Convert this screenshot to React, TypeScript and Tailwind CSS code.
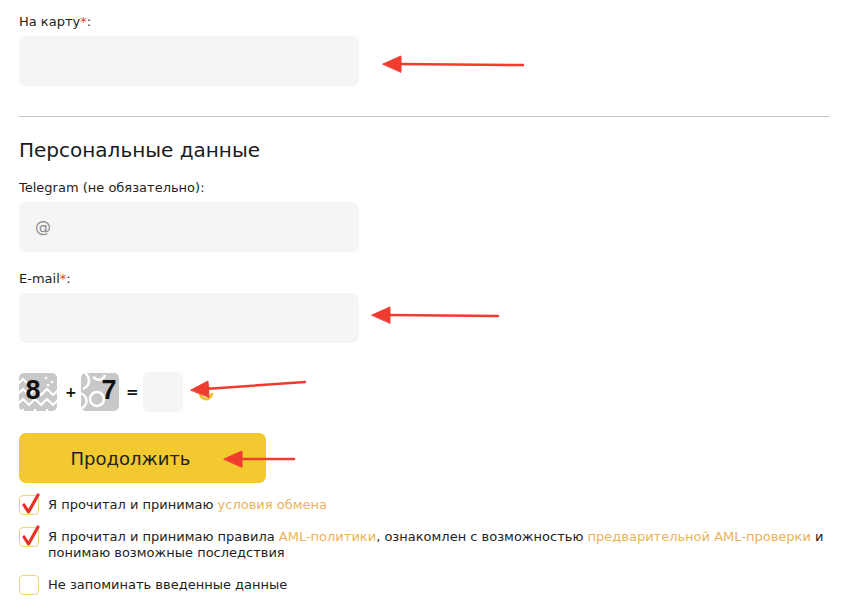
import React from 'react'

const font = "font-['DejaVu_Sans',sans-serif]"

function Label({ text, required }: { text: string; required?: boolean }) {
  return (
    <div className="text-[13px] leading-[16px] text-[#1e1e1e]">
      {text}
      {required && <span className="text-[#e5443a]">*</span>}:
    </div>
  )
}

function Field({ placeholder }: { placeholder?: string }) {
  return (
    <div className="mt-[6px] h-[50px] w-[340px] rounded-[7px] bg-[#f5f5f5] flex items-center px-[16px] text-[16px] text-[#8a8a8a]">
      {placeholder}
    </div>
  )
}

function Captcha8() {
  return (
    <svg width="38" height="38" viewBox="0 0 38 38">
      <rect width="38" height="38" rx="5" fill="#c8c8c8" />
      <g stroke="#ffffff" strokeWidth="2" fill="none">
        <path d="M-2 22 L4 16 L10 22 L16 16 L22 22 L28 16 L34 22 L40 16" />
        <path d="M-2 32 L4 26 L10 32 L16 26 L22 32 L28 26 L34 32 L40 26" />
        <path d="M-2 12 L4 6 L10 12" />
      </g>
      <g fill="#ffffff">
        <circle cx="27" cy="5" r="1.3" />
        <circle cx="33" cy="9" r="1.3" />
        <circle cx="29" cy="12" r="1.3" />
        <circle cx="4" cy="37" r="1.3" />
        <circle cx="16" cy="37" r="1.3" />
        <circle cx="28" cy="37" r="1.3" />
      </g>
      <text x="14" y="26" textAnchor="middle" fontFamily="Liberation Sans, sans-serif" fontWeight="700" fontSize="27" fill="#111111">
        8
      </text>
    </svg>
  )
}

function Captcha7() {
  return (
    <svg width="38" height="38" viewBox="0 0 38 38">
      <rect width="38" height="38" rx="5" fill="#c8c8c8" />
      <g stroke="#ffffff" strokeWidth="2.5" fill="none">
        <path d="M2 -2 C10 4 10 12 2 16" />
        <path d="M-2 20 C8 22 8 34 -2 36" />
        <circle cx="16" cy="26" r="7" />
        <path d="M12 4 C16 8 22 8 24 2" />
      </g>
      <text x="28" y="26" textAnchor="middle" fontFamily="Liberation Sans, sans-serif" fontWeight="700" fontSize="27" fill="#111111">
        7
      </text>
    </svg>
  )
}

function Check({ checked }: { checked?: boolean }) {
  return (
    <div className="relative h-[20px] w-[20px] shrink-0 rounded-[4px] border border-[#f1d27c] bg-white">
      {checked && (
        <svg width="22" height="24" viewBox="0 0 22 24" className="absolute left-[1px] top-[-4px]">
          <path d="M3 13 L7.5 20 L17 3" stroke="#e8302a" strokeWidth="3.2" fill="none" strokeLinecap="round" strokeLinejoin="round" />
        </svg>
      )}
    </div>
  )
}

const link = 'text-[#eab25a]'

export default function App() {
  return (
    <div className={`relative h-[613px] w-[849px] overflow-hidden bg-white ${font}`}>
      <div className="px-[19px] pt-[14px]">
        <Label text="На карту" required />
        <Field />

        <div className="mt-[30px] h-px w-[811px] bg-[#c9c9c9]" />

        <h2 className="mt-[21px] text-[20px] leading-[24px] text-[#1a1a1a]">Персональные данные</h2>

        <div className="mt-[18px]">
          <Label text="Telegram (не обязательно)" />
          <Field placeholder="@" />
        </div>

        <div className="mt-[19px]">
          <Label text="E-mail" required />
          <Field />
        </div>

        <div className="mt-[29px] flex items-center h-[40px]">
          <Captcha8 />
          <span className="mx-[8px] w-[8px] text-center text-[14px] font-bold text-[#111]">+</span>
          <Captcha7 />
          <span className="mx-[7px] w-[10px] text-center text-[15px] font-bold text-[#111]">=</span>
          <div className="h-[40px] w-[40px] rounded-[6px] bg-[#f5f5f5]" />
          <svg width="20" height="20" viewBox="0 0 20 20" className="ml-[13px] mt-[2px]">
            <path d="M16 10 A6 6 0 1 1 12 4.3" stroke="#f0c431" strokeWidth="3" fill="none" />
            <path d="M10 1 L15 4.5 L10 8 Z" fill="#f0c431" />
          </svg>
        </div>

        <button className="mt-[21px] h-[50px] w-[247px] rounded-[7px] bg-[#f2c92f] pr-[24px] text-[18px] text-[#222]">
          Продолжить
        </button>

        <div className="mt-[12px] flex flex-col text-[13px] leading-[16px] text-[#1e1e1e]">
          <div className="flex items-start gap-[9px]">
            <Check checked />
            <p className="pt-[2px]">
              Я прочитал и принимаю <span className={link}>условия обмена</span>
            </p>
          </div>
          <div className="mt-[12px] flex items-start gap-[9px]">
            <Check checked />
            <p className="pt-[2px] w-[790px]">
              Я прочитал и принимаю правила <span className={link}>AML-политики</span>, ознакомлен с возможностью{' '}
              <span className={link}>предварительной AML-проверки</span> и понимаю возможные последствия
            </p>
          </div>
          <div className="mt-[14px] flex items-start gap-[9px]">
            <Check />
            <p className="pt-[2px]">Не запоминать введенные данные</p>
          </div>
        </div>
      </div>

      {/* annotation arrows drawn over the form */}
      <svg className="pointer-events-none absolute left-0 top-0" width="849" height="613" viewBox="0 0 849 613">
        <g fill="#f03b2f" stroke="#f03b2f" strokeLinecap="round">
          <line x1="398" y1="64" x2="523" y2="65" strokeWidth="2.5" />
          <path d="M383 64 L401 56 L401 72 Z" strokeWidth="1" />
          <line x1="387" y1="315" x2="498" y2="316" strokeWidth="2.5" />
          <path d="M372 315 L390 307 L390 323 Z" strokeWidth="1" />
          <line x1="205" y1="389" x2="305" y2="382" strokeWidth="2.5" />
          <path d="M191 390 L208 381 L209 397 Z" strokeWidth="1" />
          <line x1="239" y1="459" x2="294" y2="459" strokeWidth="2.5" />
          <path d="M224 459 L242 451 L242 467 Z" strokeWidth="1" />
        </g>
      </svg>
    </div>
  )
}
